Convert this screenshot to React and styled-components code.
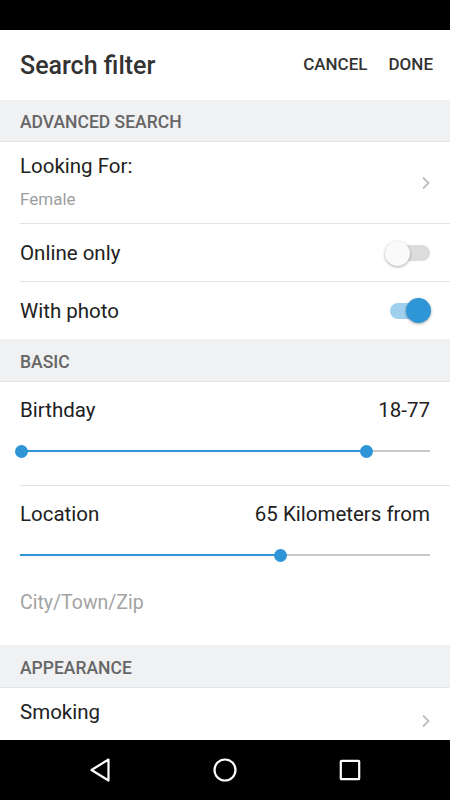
import React from "react";
import styled, { createGlobalStyle } from "styled-components";

const GlobalStyle = createGlobalStyle`
  html, body {
    margin: 0;
    padding: 0;
    background: #ffffff;
  }
  body {
    font-family: Roboto, "Liberation Sans", sans-serif;
    -webkit-font-smoothing: antialiased;
  }
`;

const BLUE = "#2e95d6";

export default function App() {
  return (
    <>
      <GlobalStyle />
      <Screen>
        <StatusBar />
        <Header>
          <Title>Search filter</Title>
          <Actions>
            <ActionButton>CANCEL</ActionButton>
            <ActionButton>DONE</ActionButton>
          </Actions>
        </Header>

        <Content>
          <SectionHeader>ADVANCED SEARCH</SectionHeader>

          <LinkRow $divider>
            <LinkText>
              <Label>Looking For:</Label>
              <SubLabel>Female</SubLabel>
            </LinkText>
            <Chevron />
          </LinkRow>

          <SwitchRow $divider>
            <Label>Online only</Label>
            <Toggle on={false} />
          </SwitchRow>

          <SwitchRow>
            <Label>With photo</Label>
            <Toggle on />
          </SwitchRow>

          <SectionHeader $tall>BASIC</SectionHeader>

          <SliderBlock $divider>
            <ValueLine>
              <Label>Birthday</Label>
              <Label>18-77</Label>
            </ValueLine>
            <Slider from={0.002} to={0.844} range />
          </SliderBlock>

          <SliderBlock $last>
            <ValueLine>
              <Label>Location</Label>
              <Label>65 Kilometers from</Label>
            </ValueLine>
            <Slider from={0} to={0.634} />
            <Placeholder>City/Town/Zip</Placeholder>
          </SliderBlock>

          <SectionHeader $tall>APPEARANCE</SectionHeader>

          <LinkRow $smoking>
            <LinkText>
              <Label>Smoking</Label>
            </LinkText>
            <Chevron />
          </LinkRow>
        </Content>

        <NavBar>
          <NavIcon viewBox="0 0 24 24">
            <path d="M20.5 1.5 L3.5 12 L20.5 22.5 Z" />
          </NavIcon>
          <NavIcon viewBox="0 0 24 24">
            <circle cx="12" cy="12" r="10.5" />
          </NavIcon>
          <NavIcon viewBox="0 0 24 24">
            <rect x="2.8" y="2.8" width="18.4" height="18.4" rx="0.8" />
          </NavIcon>
        </NavBar>
      </Screen>
    </>
  );
}

function Chevron() {
  return (
    <ChevronSvg viewBox="0 0 10 14">
      <path d="M2 1.5 L7.5 7 L2 12.5" />
    </ChevronSvg>
  );
}

function Toggle({ on }) {
  return (
    <SwitchTrack $on={on}>
      <SwitchThumb $on={on} />
    </SwitchTrack>
  );
}

function Slider({ from, to, range }) {
  return (
    <SliderTrack>
      <SliderFill style={{ left: `${from * 100}%`, width: `${(to - from) * 100}%` }} />
      {range && <SliderThumb style={{ left: `${from * 100}%` }} />}
      <SliderThumb style={{ left: `${to * 100}%` }} />
    </SliderTrack>
  );
}

//css
const Screen = styled.div`
  width: 450px;
  height: 800px;
  display: flex;
  flex-direction: column;
  overflow: hidden;
  background: #ffffff;
`;

const StatusBar = styled.div`
  height: 30px;
  flex-shrink: 0;
  background: #000000;
`;

const Header = styled.div`
  height: 70px;
  flex-shrink: 0;
  display: flex;
  align-items: center;
  justify-content: space-between;
  padding: 0 17px 0 20px;
  box-sizing: border-box;
`;

const Title = styled.h1`
  margin: 0;
  font-size: 25px;
  font-weight: 500;
  color: #333333;
`;

const Actions = styled.div`
  display: flex;
  gap: 21px;
  margin-top: -2px;
`;

const ActionButton = styled.span`
  font-size: 17px;
  font-weight: 500;
  color: #333333;
`;

const Content = styled.div`
  flex: 1;
  overflow: hidden;
  display: flex;
  flex-direction: column;
`;

const SectionHeader = styled.div`
  height: ${(p) => (p.$tall ? "43px" : "42px")};
  flex-shrink: 0;
  box-sizing: border-box;
  display: flex;
  align-items: center;
  padding: ${(p) => (p.$tall ? "4px" : "3px")} 20px 0;
  background: #f0f1f3;
  border-bottom: 1px solid #e3e4e6;
  font-size: 17.5px;
  font-weight: 500;
  color: #666666;
`;

const Row = styled.div`
  flex-shrink: 0;
  position: relative;
  display: flex;
  align-items: center;
  justify-content: space-between;
  padding: 0 20px;
  box-sizing: border-box;
  &::after {
    content: "";
    display: ${(p) => (p.$divider ? "block" : "none")};
    position: absolute;
    left: 20px;
    right: 0;
    bottom: 0;
    height: 1px;
    background: #e2e2e2;
  }
`;

const LinkRow = styled(Row)`
  height: 82px;
  align-items: ${(p) => (p.$smoking ? "flex-start" : "center")};
  padding-top: ${(p) => (p.$smoking ? "14px" : "0")};
  svg {
    margin-top: ${(p) => (p.$smoking ? "12px" : "0")};
  }
`;

const LinkText = styled.div`
  display: flex;
  flex-direction: column;
  gap: 10px;
  margin-top: -2px;
`;

const SwitchRow = styled(Row)`
  height: ${(p) => (p.$divider ? "58px" : "57px")};
`;

const Label = styled.span`
  font-size: 20.5px;
  font-weight: 400;
  color: #212121;
  line-height: 24px;
`;

const SubLabel = styled.span`
  font-size: 17px;
  color: #9e9e9e;
  line-height: 22px;
`;

const ChevronSvg = styled.svg`
  width: 10px;
  height: 14px;
  fill: none;
  stroke: #bdbdbd;
  stroke-width: 1.8;
  margin-right: -1px;
`;

const SwitchTrack = styled.div`
  position: relative;
  width: 40px;
  height: 16px;
  border-radius: 8px;
  background: ${(p) => (p.$on ? "#9fd0ee" : "#dcdcdc")};
`;

const SwitchThumb = styled.div`
  position: absolute;
  top: 50%;
  left: ${(p) => (p.$on ? "28px" : "7px")};
  width: 25px;
  height: 25px;
  margin: -12.5px 0 0 -12.5px;
  border-radius: 50%;
  background: ${(p) => (p.$on ? BLUE : "#fafafa")};
  box-shadow: 0 1px 3px rgba(0, 0, 0, 0.35);
`;

const SliderBlock = styled.div`
  flex-shrink: 0;
  position: relative;
  display: flex;
  flex-direction: column;
  padding: 16px 20px 0;
  height: ${(p) => (p.$last ? "159px" : "104px")};
  box-sizing: border-box;
  &::after {
    content: "";
    display: ${(p) => (p.$divider ? "block" : "none")};
    position: absolute;
    left: 20px;
    right: 0;
    bottom: 0;
    height: 1px;
    background: #e2e2e2;
  }
`;

const ValueLine = styled.div`
  display: flex;
  justify-content: space-between;
  align-items: center;
  height: 24px;
`;

const SliderTrack = styled.div`
  position: relative;
  margin-top: 28px;
  height: 2px;
  background: #c8c8c8;
`;

const SliderFill = styled.div`
  position: absolute;
  top: 0;
  height: 2px;
  background: ${BLUE};
`;

const SliderThumb = styled.div`
  position: absolute;
  top: 50%;
  width: 13px;
  height: 13px;
  margin: -6.5px 0 0 -6px;
  border-radius: 50%;
  background: ${BLUE};
`;

const Placeholder = styled.div`
  margin-top: 35px;
  font-size: 19.5px;
  line-height: 24px;
  color: #a3a3a3;
`;

const NavBar = styled.div`
  height: 60px;
  flex-shrink: 0;
  background: #000000;
  display: flex;
  align-items: center;
  justify-content: space-between;
  padding: 0 88px;
`;

const NavIcon = styled.svg`
  width: 24px;
  height: 24px;
  fill: none;
  stroke: #ffffff;
  stroke-width: 2.2;
  stroke-linejoin: round;
`;
